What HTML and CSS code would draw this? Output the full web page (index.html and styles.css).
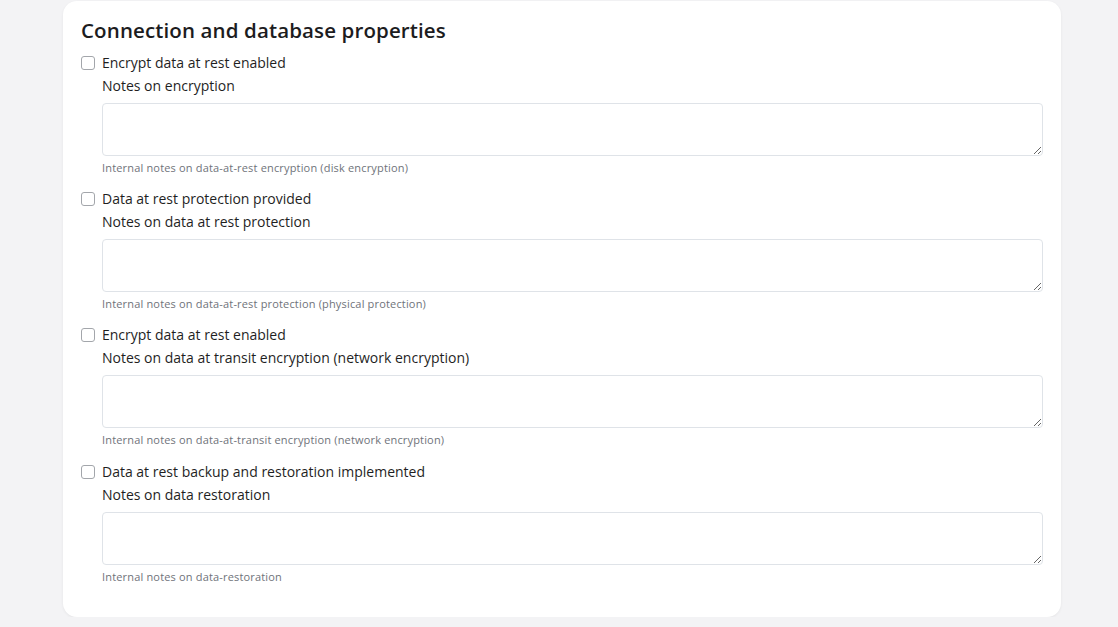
FILE: index.html
```html
<!DOCTYPE html>
<html lang="en">
<head>
<meta charset="utf-8">
<title>Connection and database properties</title>
<link rel="stylesheet" href="styles.css">
</head>
<body>
<div class="page">
  <section class="card">
    <h2 class="card-title">Connection and database properties</h2>

    <div class="group">
      <label class="check-row"><input type="checkbox" class="check"><span>Encrypt data at rest enabled</span></label>
      <div class="field">
        <div class="field-label">Notes on encryption</div>
        <textarea class="notes"></textarea>
        <div class="help">Internal notes on data-at-rest encryption (disk encryption)</div>
      </div>
    </div>

    <div class="group">
      <label class="check-row"><input type="checkbox" class="check"><span>Data at rest protection provided</span></label>
      <div class="field">
        <div class="field-label">Notes on data at rest protection</div>
        <textarea class="notes"></textarea>
        <div class="help">Internal notes on data-at-rest protection (physical protection)</div>
      </div>
    </div>

    <div class="group">
      <label class="check-row"><input type="checkbox" class="check"><span>Encrypt data at rest enabled</span></label>
      <div class="field">
        <div class="field-label">Notes on data at transit encryption (network encryption)</div>
        <textarea class="notes"></textarea>
        <div class="help">Internal notes on data-at-transit encryption (network encryption)</div>
      </div>
    </div>

    <div class="group group-last">
      <label class="check-row"><input type="checkbox" class="check"><span>Data at rest backup and restoration implemented</span></label>
      <div class="field">
        <div class="field-label">Notes on data restoration</div>
        <textarea class="notes"></textarea>
        <div class="help">Internal notes on data-restoration</div>
      </div>
    </div>
  </section>
</div>
</body>
</html>
```

FILE: styles.css
```css
html, body {
  margin: 0;
  padding: 0;
  background: #f3f3f5;
  font-family: "Open Sans", "Noto Sans", sans-serif;
  color: #1f1f1f;
}

.page {
  padding-top: 1px;
  padding-left: 63px;
}

.card {
  width: 998px;
  box-sizing: border-box;
  background: #ffffff;
  border-radius: 14px;
  box-shadow: 0 1px 3px rgba(0, 0, 0, 0.06);
  padding: 15px 18px 33px 18px;
}

.card-title {
  margin: 0;
  font-size: 20.5px;
  line-height: 28px;
  font-weight: 600;
  letter-spacing: 0.12px;
  color: #1c1c1e;
}

.group {
  display: flex;
  flex-direction: column;
  margin-top: 14px;
}

.card-title + .group {
  margin-top: 9px;
}

.group-last {
  margin-top: 15px;
}

.check-row {
  display: flex;
  align-items: center;
  gap: 7px;
  height: 20px;
  font-size: 14px;
  line-height: 20px;
  color: #1f1f1f;
}

.check {
  appearance: none;
  -webkit-appearance: none;
  margin: 0;
  width: 14px;
  height: 14px;
  box-sizing: border-box;
  border: 1.5px solid #a3a6ab;
  border-radius: 3px;
  background: #fff;
}

.field {
  display: flex;
  flex-direction: column;
  padding-left: 21px;
}

.field-label {
  margin-top: 3px;
  font-size: 14px;
  line-height: 20px;
  font-weight: 500;
  color: #1f1f1f;
}

.notes {
  margin-top: 7px;
  height: 53px;
  box-sizing: border-box;
  width: 100%;
  border: 1px solid #dfe3e8;
  border-radius: 4px;
  resize: vertical;
  font-family: inherit;
  background: #fff;
}

.help {
  margin-top: 5px;
  font-size: 11px;
  line-height: 14px;
  letter-spacing: 0.17px;
  color: #6f737a;
}
```
